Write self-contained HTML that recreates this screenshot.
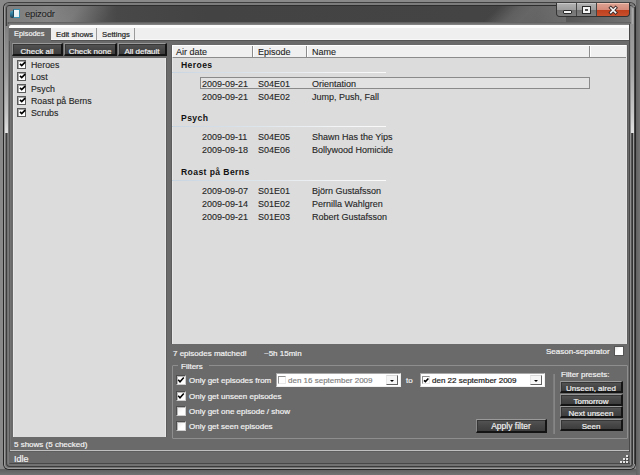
<!DOCTYPE html>
<html><head><meta charset="utf-8">
<style>
*{margin:0;padding:0;box-sizing:border-box}
html,body{width:640px;height:475px;overflow:hidden;background:#7a7a7a;font-family:"Liberation Sans",sans-serif;font-size:9px;line-height:10px;color:#222}
div{position:absolute;white-space:nowrap}
.l{color:#f2f2f2;font-size:8px;-webkit-text-stroke:0.2px #f2f2f2}
.d{font-size:9px;color:#262626;-webkit-text-stroke:0.12px #262626}
.btn{background:linear-gradient(#555 0,#474747 50%,#3d3d3d 100%);border-top:1px solid #9a9a9a;border-left:1px solid #8a8a8a;border-right:2px solid #141414;border-bottom:2px solid #141414;color:#f0f0f0;text-align:center;font-size:8px;line-height:9px;padding-top:2px;-webkit-text-stroke:0.2px #f0f0f0;box-shadow:inset 1px 1px 0 #363636}
.cb{width:9px;height:9px;background:#fff;border:1px solid #5a5a5a;box-shadow:inset 1px 1px 0 #aaa}
.ucb{width:9px;height:9px;background:linear-gradient(135deg,#d8d8d8,#fff);border:1px solid #8a8a8a}
.ck{left:1px;top:0px;width:7px;height:7px}
.sep{height:1px;width:214px;background:linear-gradient(90deg,#c8d5e2,#dde5ec 40%,#f2f4f6 75%,#fafafa)}
</style></head><body>
<!-- desktop shade -->
<div style="left:0;top:0;width:640px;height:475px;background:#898989"></div>
<div style="left:0;top:469px;width:640px;height:6px;background:linear-gradient(#5e5e5e,#747474)"></div>
<div style="left:636px;top:0;width:4px;height:475px;background:linear-gradient(90deg,#626262,#747474)"></div>
<!-- window frame -->
<div style="left:3px;top:2px;width:633px;height:468px;border:1px solid #262626;border-top-color:#404040;border-radius:6px 6px 6px 6px;background:#727272"></div>
<div style="left:4px;top:3px;width:631px;height:466px;border:1px solid #9c9c9c;border-top:2px solid #7c7c7c;border-radius:5px 5px 5px 5px"></div>
<div style="left:6px;top:5px;width:627px;height:462px;border:1px solid #3c3c3c;border-radius:4px 4px 4px 4px;border-top-color:#2e2e2e"></div>
<!-- title bar dark glass -->
<div style="left:7px;top:6px;width:625px;height:16px;background:linear-gradient(90deg,#7a7a7a 0,#7c7c7c 40px,#5a5a5a 85px,#484848 110px,#434343 200px,#444 470px,#454545 500px,#484848 530px,#585858 560px,#747474 625px);border-radius:3px 3px 0 0"></div>
<div style="left:7px;top:6px;width:140px;height:16px;background:linear-gradient(128deg,rgba(255,255,255,0.04) 20%,rgba(255,255,255,0.12) 48%,rgba(255,255,255,0) 72%)"></div>
<div style="left:476px;top:6px;width:90px;height:16px;background:linear-gradient(135deg,rgba(255,255,255,0) 22%,rgba(255,255,255,0.14) 42%,rgba(255,255,255,0.17) 55%,rgba(255,255,255,0.13) 100%)"></div>
<div style="left:630px;top:6px;width:3px;height:18px;background:linear-gradient(90deg,#7a7a7a,#9a9a9a 60%,#b4b4b4);border-radius:0 3px 0 0"></div>
<!-- app icon -->
<div style="left:10px;top:11px;width:4px;height:7px;background:linear-gradient(#4aa0c0,#2a6a8a 60%,#2a3a48);border-radius:2px 0 0 2px"></div>
<div style="left:13px;top:9px;width:7px;height:9px;background:linear-gradient(135deg,#f4f8fa,#e4eef2);border:1px solid #3a90b0;border-left:1px solid #1c4a60;border-radius:1px"></div>
<div style="left:25px;top:7px;font-size:9.6px;line-height:13px;letter-spacing:-0.25px;color:#1c1c1c;text-shadow:0 0 3px #9a9a9a">epizodr</div>
<!-- caption buttons -->
<div style="left:556px;top:3px;width:74px;height:14px;border:1px solid #333;border-top:none;border-radius:0 0 4px 4px;background:#444"></div>
<div style="left:557px;top:3px;width:19px;height:13px;border-radius:0 0 0 3px;border-top:1px solid #c8c8c8;background:linear-gradient(#b0b0b0,#9c9c9c 50%,#727272 52%,#7e7e7e)"></div>
<div style="left:563px;top:10px;width:9px;height:4px;background:#f4f4f4;border:1px solid #2a2a2a;border-radius:1px"></div>
<div style="left:577px;top:3px;width:19px;height:13px;border-top:1px solid #c8c8c8;background:linear-gradient(#b0b0b0,#9c9c9c 50%,#727272 52%,#7e7e7e)"></div>
<div style="left:583px;top:7px;width:7px;height:6px;border:2px solid #f4f4f4;border-top-width:2px;outline:1px solid #2a2a2a;background:#505050"></div>
<div style="left:597px;top:3px;width:32px;height:13px;border-radius:0 0 3px 0;border-top:1px solid #f0c0b0;background:linear-gradient(#dca090,#d58a78 50%,#c0401e 52%,#c8502c)"></div>
<svg style="position:absolute;left:608px;top:5px" width="10" height="10" viewBox="0 0 10 10"><path d="M2.8 2.8 L7.6 7.6 M7.6 2.8 L2.8 7.6" stroke="#3a2a2a" stroke-width="3.4" stroke-linecap="square"/><path d="M2.8 2.8 L7.6 7.6 M7.6 2.8 L2.8 7.6" stroke="#f8f8f8" stroke-width="1.6" stroke-linecap="square"/></svg>

<!-- client -->
<div style="left:8px;top:22px;width:623px;height:442px;background:#6a6a6a;border-left:1px solid #5a5a5a;border-bottom:1px solid #484848"></div>
<div style="left:9px;top:22px;width:622px;height:3px;background:linear-gradient(#5a5a5a,#8a8a8a)"></div>
<!-- right frame lines -->
<div style="left:629px;top:24px;width:1px;height:440px;background:#484848"></div>
<div style="left:630px;top:24px;width:1px;height:441px;background:#909090"></div>
<div style="left:631px;top:24px;width:1px;height:441px;background:#555"></div>
<div style="left:632px;top:24px;width:1px;height:440px;background:#333"></div>
<div style="left:633px;top:8px;width:1px;height:456px;background:#9a9a9a"></div>
<div style="left:634px;top:7px;width:1px;height:457px;background:#444"></div>
<!-- left frame lines -->
<div style="left:8px;top:24px;width:1px;height:440px;background:#7a7a7a"></div>
<div style="left:9px;top:41px;width:1px;height:423px;background:#555"></div>
<div style="left:10px;top:41px;width:1px;height:409px;background:#747474"></div>
<!-- frame reflections -->
<div style="left:5px;top:26px;width:3px;height:107px;background:linear-gradient(#808080,#9a9a9a 40%,#c4c4c4 82%,#e2e2e2)"></div>
<div style="left:631px;top:24px;width:3px;height:109px;background:linear-gradient(#959595,#a4a4a4 40%,#c8c8c8 82%,#e2e2e2)"></div>
<!-- tab strip -->
<div style="left:9px;top:25px;width:620px;height:15px;background:#efefef;border-top:3px solid #fcfcfc;border-bottom:1px solid #f8f8f8;border-radius:2px 0 0 0"></div>
<div style="left:9px;top:40px;width:620px;height:1px;background:#555"></div>
<div style="left:9px;top:28px;width:42px;height:13px;background:#696969"></div>
<div class="l" style="left:14px;top:29px;font-size:7.4px">Episodes</div>
<div style="left:56px;top:30px;color:#222;font-size:7.7px;-webkit-text-stroke:0.2px #222">Edit shows</div>
<div style="left:96px;top:28px;width:1px;height:12px;background:#9a9a9a"></div>
<div style="left:102px;top:30px;color:#222;font-size:7.7px;-webkit-text-stroke:0.2px #222">Settings</div>
<div style="left:134px;top:28px;width:1px;height:12px;background:#9a9a9a"></div>

<!-- left buttons -->
<div class="btn" style="left:12px;top:43px;width:51px;height:13px;padding-top:3px">Check all</div>
<div class="btn" style="left:64px;top:43px;width:53px;height:13px;padding-top:3px">Check none</div>
<div class="btn" style="left:118px;top:43px;width:49px;height:13px;padding-top:3px">All default</div>
<!-- left list -->
<div style="left:13px;top:58px;width:153px;height:379px;background:#dcdcdc;border-left:1px solid #e8e8e8;border-right:1px solid #e8e8e8"></div>
<div style="left:166px;top:58px;width:1px;height:379px;background:#5c5c5c"></div>
<div class="cb" style="left:17px;top:60px"><svg class="ck" style="position:absolute" viewBox="0 0 7 7"><path d="M1 2.9 L2.7 4.6 L6.2 1.1" stroke="#000" stroke-width="1.7" fill="none"/></svg></div><div class="d" style="left:31px;top:60px;font-size:8.8px">Heroes</div>
<div class="cb" style="left:17px;top:72px"><svg class="ck" style="position:absolute" viewBox="0 0 7 7"><path d="M1 2.9 L2.7 4.6 L6.2 1.1" stroke="#000" stroke-width="1.7" fill="none"/></svg></div><div class="d" style="left:31px;top:72px;font-size:8.8px">Lost</div>
<div class="cb" style="left:17px;top:84px"><svg class="ck" style="position:absolute" viewBox="0 0 7 7"><path d="M1 2.9 L2.7 4.6 L6.2 1.1" stroke="#000" stroke-width="1.7" fill="none"/></svg></div><div class="d" style="left:31px;top:84px;font-size:8.8px">Psych</div>
<div class="cb" style="left:17px;top:96px"><svg class="ck" style="position:absolute" viewBox="0 0 7 7"><path d="M1 2.9 L2.7 4.6 L6.2 1.1" stroke="#000" stroke-width="1.7" fill="none"/></svg></div><div class="d" style="left:31px;top:96px;font-size:8.8px">Roast på Berns</div>
<div class="cb" style="left:17px;top:108px"><svg class="ck" style="position:absolute" viewBox="0 0 7 7"><path d="M1 2.9 L2.7 4.6 L6.2 1.1" stroke="#000" stroke-width="1.7" fill="none"/></svg></div><div class="d" style="left:31px;top:108px;font-size:8.8px">Scrubs</div>
<div class="l" style="left:14px;top:440px">5 shows (5 checked)</div>

<!-- right list view -->
<div style="left:172px;top:45px;width:455px;height:299px;background:#dcdcdc;border-left:1px solid #e8e8e8;border-right:1px solid #e4e4e4"></div>
<div style="left:627px;top:45px;width:1px;height:299px;background:#5e5e5e"></div>
<div style="left:171px;top:45px;width:1px;height:299px;background:#5c5c5c"></div>
<div style="left:172px;top:45px;width:454px;height:13px;background:#f0f0f0;border-top:1px solid #fff;border-left:1px solid #fff;border-bottom:1px solid #8c8c8c"></div>
<div style="left:252px;top:46px;width:1px;height:11px;background:#8c8c8c"></div><div style="left:253px;top:46px;width:1px;height:11px;background:#fff"></div>
<div style="left:306px;top:46px;width:1px;height:11px;background:#8c8c8c"></div><div style="left:307px;top:46px;width:1px;height:11px;background:#fff"></div>
<div style="left:589px;top:46px;width:1px;height:11px;background:#8c8c8c"></div><div style="left:590px;top:46px;width:1px;height:11px;background:#fff"></div>
<div class="d" style="left:176px;top:47px">Air date</div>
<div class="d" style="left:258px;top:47px">Episode</div>
<div class="d" style="left:312px;top:47px">Name</div>

<div style="left:181px;top:60px;font-weight:bold;font-size:8.6px;letter-spacing:0.4px;color:#111">Heroes</div>
<div class="sep" style="left:172px;top:72px"></div>
<div style="left:200px;top:77px;width:390px;height:12px;border:1px solid #8a8a8a;background:#e2e2e2"></div>
<div class="d" style="left:202px;top:79px">2009-09-21</div><div class="d" style="left:258px;top:79px">S04E01</div><div class="d" style="left:312px;top:79px">Orientation</div>
<div class="d" style="left:202px;top:92px">2009-09-21</div><div class="d" style="left:258px;top:92px">S04E02</div><div class="d" style="left:312px;top:92px">Jump, Push, Fall</div>

<div style="left:181px;top:113px;font-weight:bold;font-size:8.6px;letter-spacing:0.4px;color:#111">Psych</div>
<div class="sep" style="left:172px;top:126px"></div>
<div class="d" style="left:202px;top:132px">2009-09-11</div><div class="d" style="left:258px;top:132px">S04E05</div><div class="d" style="left:312px;top:132px">Shawn Has the Yips</div>
<div class="d" style="left:202px;top:145px">2009-09-18</div><div class="d" style="left:258px;top:145px">S04E06</div><div class="d" style="left:312px;top:145px">Bollywood Homicide</div>

<div style="left:181px;top:167px;font-weight:bold;font-size:8.6px;letter-spacing:0.4px;color:#111">Roast på Berns</div>
<div class="sep" style="left:172px;top:180px"></div>
<div class="d" style="left:202px;top:186px">2009-09-07</div><div class="d" style="left:258px;top:186px">S01E01</div><div class="d" style="left:312px;top:186px">Björn Gustafsson</div>
<div class="d" style="left:202px;top:199px">2009-09-14</div><div class="d" style="left:258px;top:199px">S01E02</div><div class="d" style="left:312px;top:199px">Pernilla Wahlgren</div>
<div class="d" style="left:202px;top:212px">2009-09-21</div><div class="d" style="left:258px;top:212px">S01E03</div><div class="d" style="left:312px;top:212px">Robert Gustafsson</div>

<!-- below list -->
<div class="l" style="left:173px;top:349px">7 episodes matched!</div>
<div class="l" style="left:264px;top:349px">~5h 15min</div>
<div class="l" style="left:546px;top:347px">Season-separator</div>
<div class="ucb" style="left:614px;top:346px;width:10px;height:10px;border-color:#555;background:linear-gradient(135deg,#e0e0e0,#fff 40%,#fff)"></div>

<!-- filters group -->
<div style="left:172px;top:365px;width:456px;height:74px;border:1px solid #8e8e8e;border-radius:1px"></div>
<div style="left:178px;top:361px;width:31px;height:8px;background:#6a6a6a"></div>
<div class="l" style="left:181px;top:362px">Filters</div>
<div style="left:176px;top:375px;width:10px;height:10px;background:#fff;border-top:1px solid #4e4e4e;border-left:1px solid #4e4e4e;border-right:1px solid #cfcfcf;border-bottom:1px solid #cfcfcf;box-shadow:inset 1px 1px 0 #b8b8b8"><svg style="position:absolute;left:0;top:0" width="8" height="8" viewBox="0 0 8 8"><path d="M1.2 3.8 L3 5.8 L6.8 1.4" stroke="#000" stroke-width="1.5" fill="none"/></svg></div><div class="l" style="left:189px;top:376px">Only get episodes from</div>
<div style="left:176px;top:391px;width:10px;height:10px;background:#fff;border-top:1px solid #4e4e4e;border-left:1px solid #4e4e4e;border-right:1px solid #cfcfcf;border-bottom:1px solid #cfcfcf;box-shadow:inset 1px 1px 0 #b8b8b8"><svg style="position:absolute;left:0;top:0" width="8" height="8" viewBox="0 0 8 8"><path d="M1.2 3.8 L3 5.8 L6.8 1.4" stroke="#000" stroke-width="1.5" fill="none"/></svg></div><div class="l" style="left:189px;top:392px">Only get unseen episodes</div>
<div style="left:176px;top:406px;width:10px;height:10px;background:#fff;border-top:1px solid #4e4e4e;border-left:1px solid #4e4e4e;border-right:1px solid #cfcfcf;border-bottom:1px solid #cfcfcf;box-shadow:inset 1px 1px 0 #b8b8b8;background:linear-gradient(135deg,#e6e6e6,#fff 60%)"></div><div class="l" style="left:189px;top:407px">Only get one episode / show</div>
<div style="left:176px;top:421px;width:10px;height:10px;background:#fff;border-top:1px solid #4e4e4e;border-left:1px solid #4e4e4e;border-right:1px solid #cfcfcf;border-bottom:1px solid #cfcfcf;box-shadow:inset 1px 1px 0 #b8b8b8;background:linear-gradient(135deg,#e6e6e6,#fff 60%)"></div><div class="l" style="left:189px;top:422px">Only get seen episodes</div>

<div style="left:276px;top:373px;width:125px;height:14px;background:#fff;border-top:1px solid #a8a8a8;border-left:1px solid #a8a8a8;border-bottom:1px solid #f0f0f0;border-right:1px solid #f0f0f0"></div>
<div style="left:278px;top:376px;width:8px;height:8px;border-top:1px solid #909090;border-left:1px solid #909090;border-right:1px solid #e8e8e8;border-bottom:1px solid #e8e8e8;background:#fff"></div>
<div style="left:288px;top:376px;color:#7c7c7c;font-size:8px;-webkit-text-stroke:0.15px #7c7c7c">den 16 september 2009</div>
<div style="left:386px;top:375px;width:12px;height:10px;background:#f6f6f6;border-right:1px solid #606060;border-bottom:1px solid #606060;border-top:1px solid #d8d8d8;border-left:1px solid #e8e8e8"></div>
<div style="left:390px;top:380px;width:0;height:0;border-left:2px solid transparent;border-right:2px solid transparent;border-top:2.5px solid #000"></div>
<div class="l" style="left:406px;top:376px">to</div>
<div style="left:420px;top:373px;width:125px;height:14px;background:#fff;border-top:1px solid #a8a8a8;border-left:1px solid #a8a8a8;border-bottom:1px solid #f0f0f0;border-right:1px solid #f0f0f0"></div>
<div style="left:422px;top:376px;width:8px;height:8px;border-top:1px solid #909090;border-left:1px solid #909090;border-right:1px solid #e8e8e8;border-bottom:1px solid #e8e8e8;background:#fff"><svg style="position:absolute;left:0;top:0" width="6" height="6" viewBox="0 0 6 6"><path d="M1 3.4 L2.4 4.6 L5.4 1.4" stroke="#000" stroke-width="1.5" fill="none"/></svg></div>
<div style="left:432px;top:376px;color:#222;font-size:8px;-webkit-text-stroke:0.2px #222">den 22 september 2009</div>
<div style="left:530px;top:375px;width:12px;height:10px;background:#f6f6f6;border-right:1px solid #606060;border-bottom:1px solid #606060;border-top:1px solid #d8d8d8;border-left:1px solid #e8e8e8"></div>
<div style="left:534px;top:380px;width:0;height:0;border-left:2px solid transparent;border-right:2px solid transparent;border-top:2.5px solid #000"></div>

<div class="btn" style="left:476px;top:419px;width:71px;height:14px;padding-top:2px;font-size:8.5px">Apply filter</div>
<div style="left:553px;top:374px;width:2px;height:60px;background:linear-gradient(90deg,#7a7a7a,#8a8a8a)"></div>
<div class="l" style="left:561px;top:370px">Filter presets:</div>
<div class="btn" style="left:560px;top:381px;width:63px;height:12px">Unseen, aired</div>
<div class="btn" style="left:560px;top:394px;width:63px;height:12px">Tomorrow</div>
<div class="btn" style="left:560px;top:406px;width:63px;height:12px">Next unseen</div>
<div class="btn" style="left:560px;top:419px;width:63px;height:12px">Seen</div>

<!-- status bar -->
<div style="left:10px;top:450px;width:619px;height:1px;background:#c0c0c0"></div>
<div style="left:10px;top:451px;width:619px;height:1px;background:#5e5e5e"></div>
<div style="left:9px;top:452px;width:621px;height:11px;background:#6a6a6a"></div>
<div class="l" style="left:14px;top:454px;font-size:9px">Idle</div>
<div style="left:626px;top:455px;width:2px;height:2px;background:#e4e4e4;box-shadow:1px 1px 0 #484848"></div>
<div style="left:623px;top:458px;width:2px;height:2px;background:#e4e4e4;box-shadow:1px 1px 0 #484848"></div>
<div style="left:626px;top:458px;width:2px;height:2px;background:#e4e4e4;box-shadow:1px 1px 0 #484848"></div>
<div style="left:620px;top:461px;width:2px;height:2px;background:#e4e4e4;box-shadow:1px 1px 0 #484848"></div>
<div style="left:623px;top:461px;width:2px;height:2px;background:#e4e4e4;box-shadow:1px 1px 0 #484848"></div>
<div style="left:626px;top:461px;width:2px;height:2px;background:#e4e4e4;box-shadow:1px 1px 0 #484848"></div>
</body></html>
